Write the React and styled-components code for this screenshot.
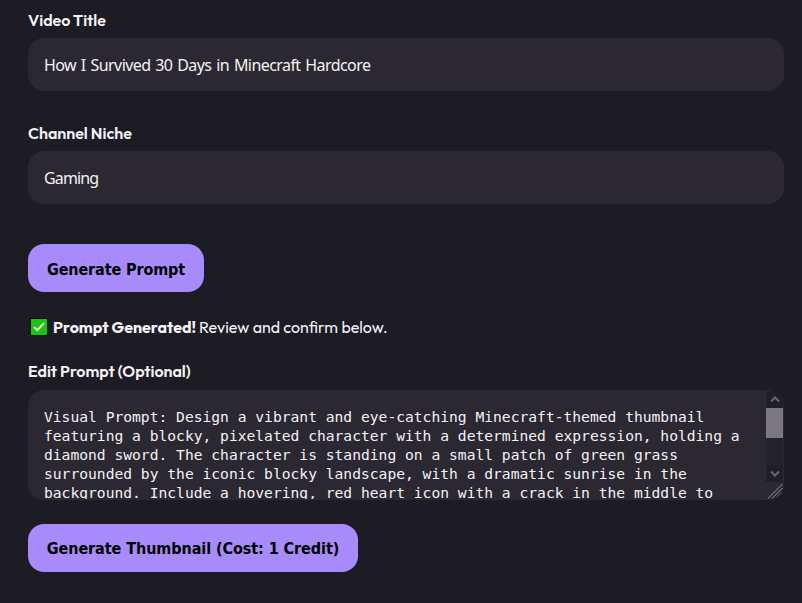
import React from "react";
import styled, { createGlobalStyle } from "styled-components";

const GlobalStyle = createGlobalStyle`
  *, *::before, *::after { box-sizing: border-box; }
  html, body { margin: 0; background: #1d1b24; }
  body { overflow: hidden; }
`;

const Page = styled.main`
  display: flex;
  flex-direction: column;
  align-items: flex-start;
  height: 603px;
  padding: 10px 18px 0 28px;
  background: #1d1b24;
  color: #f4f2f7;
  font-family: Outfit, Lato, sans-serif;
`;

const Field = styled.div`
  display: flex;
  flex-direction: column;
  width: 100%;
  margin-bottom: ${(p) => p.$gap}px;
`;

const Label = styled.label`
  height: 20px;
  margin-bottom: ${(p) => p.$gap || 8}px;
  font-size: 16px;
  font-weight: 600;
  line-height: 20px;
  letter-spacing: -0.03px;
  white-space: nowrap;
`;

const TextInput = styled.input`
  width: 100%;
  height: 53px;
  padding: 1px 16px 0;
  border: 0;
  border-radius: 16px;
  outline: none;
  background: #2b2831;
  color: #f4f2f7;
  font: 16px "Noto Sans", sans-serif;
  letter-spacing: ${(p) => p.$tracking || 0}px;
  word-spacing: 1.2px;
`;

const Button = styled.button`
  display: flex;
  align-items: center;
  justify-content: center;
  width: ${(p) => p.$width}px;
  height: 48px;
  flex: none;
  padding: ${(p) => p.$drop || 0}px 0 0;
  border: 0;
  border-radius: 16px;
  background: #a78bfa;
  color: #000;
  font: bold 16px "DejaVu Sans Condensed", "DejaVu Sans", sans-serif;
  font-stretch: condensed;
  letter-spacing: ${(p) => p.$tracking || 0}px;
  white-space: nowrap;
`;

const Status = styled.div`
  display: flex;
  align-items: center;
  height: 20px;
  margin: 25px 0 24px 2px;
  font-size: 16px;
  line-height: 20px;
  white-space: nowrap;
`;

const CheckIcon = styled.svg`
  width: 18px;
  height: 18px;
  margin-right: 5px;
`;

const StatusTitle = styled.strong`
  width: 146px;
  font-weight: 700;
`;

const StatusText = styled.span`
  font-weight: 400;
`;

const PromptBox = styled.div`
  display: flex;
  height: 110px;
  border-radius: 16px;
  overflow: hidden;
  background: #2b2831;
`;

const PromptText = styled.div`
  flex: 1;
  height: 109px;
  padding: 17px 0 0 16px;
  overflow: hidden;
  font: 14.64px "DejaVu Sans Mono", monospace;
  line-height: 19px;
  white-space: pre;
`;

const SideRail = styled.div`
  display: flex;
  flex-direction: column;
  width: 18px;
  padding: 1px 1px 0 0;
`;

const Scrollbar = styled.div`
  display: flex;
  flex-direction: column;
  height: 91px;
  background: #24222b;
`;

const ScrollButton = styled.div`
  display: flex;
  align-items: center;
  justify-content: center;
  height: 17px;
  background: #201e26;
`;

const Thumb = styled.div`
  height: 30px;
  margin-bottom: 27px;
  background: #7b787f;
`;

const promptLines = [
  "Visual Prompt: Design a vibrant and eye-catching Minecraft-themed thumbnail",
  "featuring a blocky, pixelated character with a determined expression, holding a",
  "diamond sword. The character is standing on a small patch of green grass",
  "surrounded by the iconic blocky landscape, with a dramatic sunrise in the",
  "background. Include a hovering, red heart icon with a crack in the middle to",
];

function Chevron({ down }) {
  return (
    <svg width="10" height="8" viewBox="0 0 10 8" fill="none" stroke="#69676e" strokeWidth="2">
      <path d={down ? "M1 1.5 5 5.5 9 1.5" : "M1 5.5 5 1.5 9 5.5"} />
    </svg>
  );
}

export default function App() {
  return (
    <>
      <GlobalStyle />
      <Page>
        <Field $gap={32}>
          <Label htmlFor="title">Video Title</Label>
          <TextInput id="title" $tracking={-0.57} defaultValue="How I Survived 30 Days in Minecraft Hardcore" />
        </Field>
        <Field $gap={40}>
          <Label htmlFor="niche">Channel Niche</Label>
          <TextInput id="niche" $tracking={-0.85} defaultValue="Gaming" />
        </Field>
        <Button $width={176} $drop={2} $tracking={-0.12}>Generate Prompt</Button>
        <Status>
          <CheckIcon viewBox="0 0 18 18">
            <rect x=".5" y=".5" width="17" height="17" fill="#16c60c" stroke="#07110a" />
            <path d="M4 9.2 7.2 12.2 14 5.2" fill="none" stroke="#fff" strokeWidth="1.8" />
          </CheckIcon>
          <StatusTitle>Prompt Generated!</StatusTitle>
          <StatusText>Review and confirm below.</StatusText>
        </Status>
        <Field $gap={24}>
          <Label $gap={9}>Edit Prompt (Optional)</Label>
          <PromptBox>
            <PromptText>{promptLines.join("\n")}</PromptText>
            <SideRail>
              <Scrollbar>
                <ScrollButton><Chevron /></ScrollButton>
                <Thumb />
                <ScrollButton><Chevron down /></ScrollButton>
              </Scrollbar>
              <svg width="17" height="18" viewBox="0 0 17 18" stroke="#99979e" strokeWidth="1">
                <path d="M2 16.5 16.5 2M6 16.5 16.5 6M10 16.5 16.5 10M14 16.5 16.5 14" />
              </svg>
            </SideRail>
          </PromptBox>
        </Field>
        <Button $width={330} $tracking={-0.07}>Generate Thumbnail (Cost: 1 Credit)</Button>
      </Page>
    </>
  );
}
